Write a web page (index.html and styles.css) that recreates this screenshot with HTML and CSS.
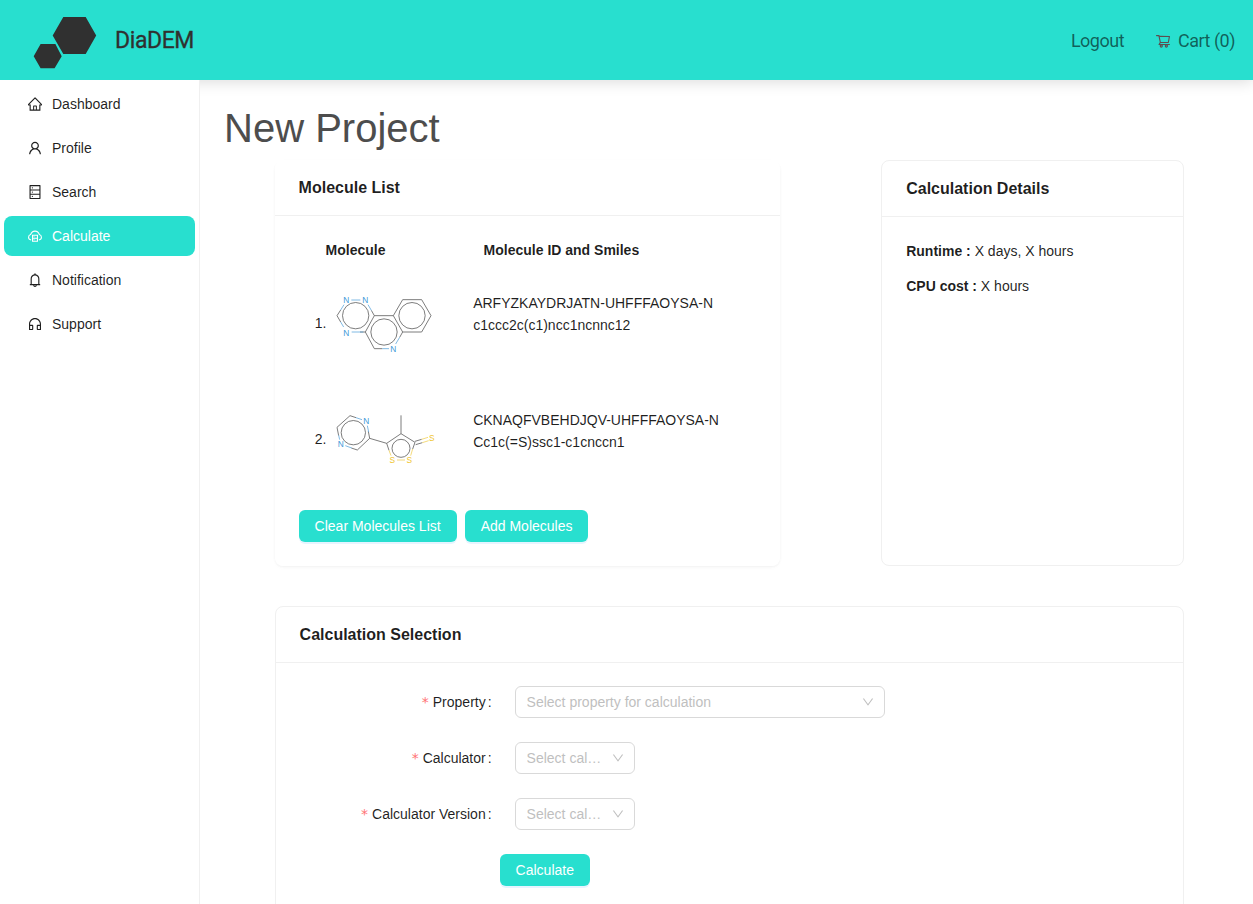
FILE: index.html
```html
<!DOCTYPE html>
<html lang="en">
<head>
<meta charset="utf-8">
<title>DiaDEM</title>
<link rel="stylesheet" href="styles.css">
</head>
<body>
<header class="topbar">
  <svg class="logo" width="64" height="54" viewBox="0 0 64 54"><path d="M30.3 1h22.4L63.2 19.600 52.700 38H30.300L19.700 19.600zM7.600 28h14.800l6.300 12.300L21.600 52.300H7.600L.7 40.300z"/></svg>
  <span class="brand">DiaDEM</span>
  <nav class="actions">
    <a class="action">Logout</a>
    <a class="action cart"><svg class="icon" viewBox="64 64 896 896"><path d="M922.9 701.9H327.4l29.9-60.9 496.8-.9c16.8 0 31.2-12 34.2-28.6l68.8-385.1c1.8-10.1-.9-20.5-7.5-28.4a34.99 34.99 0 00-26.6-12.5l-632-2.1-5.4-25.4c-3.4-16.2-18-28-34.6-28H96.500a35.300 35.300 0 100 70.600h125.900L246 312.800l58.100 281.300-74.800 122.100a34.960 34.960 0 00-3 36.800c6 11.900 18.100 19.400 31.500 19.400h62.800a102.430 102.430 0 00-20.600 61.700c0 56.600 46 102.600 102.600 102.600s102.600-46 102.600-102.600c0-22.300-7.400-44-20.600-61.700h161.100a102.430 102.430 0 00-20.600 61.700c0 56.600 46 102.600 102.600 102.600s102.600-46 102.600-102.600c0-22.300-7.400-44-20.600-61.700H923c19.400 0 35.300-15.800 35.300-35.300a35.420 35.420 0 00-35.400-35.200zM305.700 253l575.800 1.900-56.400 315.800-452.300.8L305.700 253zm96.900 612.700c-17.400 0-31.600-14.200-31.600-31.600 0-17.400 14.200-31.600 31.600-31.600s31.600 14.200 31.600 31.600a31.600 31.600 0 01-31.600 31.600zm325.100 0c-17.400 0-31.600-14.200-31.600-31.600 0-17.400 14.200-31.600 31.600-31.600s31.600 14.200 31.600 31.600a31.600 31.600 0 01-31.600 31.600z"/></svg><span>Cart (0)</span></a>
  </nav>
</header>
<div class="layout">
  <aside class="sider">
    <a class="item"><svg class="icon" viewBox="64 64 896 896"><path d="M946.5 505L560.1 118.8l-25.9-25.9a31.5 31.5 0 00-44.4 0L77.5 505a63.9 63.9 0 00-18.8 46c.4 35.2 29.7 63.3 64.9 63.3h42.5V940h691.8V614.3h43.4c17.1 0 33.2-6.7 45.3-18.8a63.6 63.6 0 0018.7-45.3c0-17-6.7-33.1-18.8-45.2zM568 868H456V664h112v204zm217.9-325.7V868H632V640c0-22.1-17.9-40-40-40H432c-22.1 0-40 17.900-40 40v228H238.100V542.300h-96l370-369.700 23.100 23.100L882 542.300h-96.100z"/></svg>Dashboard</a>
    <a class="item"><svg class="icon" viewBox="64 64 896 896"><path d="M858.5 763.6a374 374 0 00-80.6-119.5 375.63 375.63 0 00-119.5-80.6c-.4-.2-.8-.3-1.2-.5C719.5 518 760 444.7 760 362c0-137-111-248-248-248S264 225 264 362c0 82.7 40.5 156 102.8 201.100-.4.2-.8.3-1.200.5-44.800 18.900-85 46-119.500 80.600a375.630 375.630 0 00-80.600 119.500A371.700 371.700 0 00136 901.800a8 8 0 008 8.200h60c4.400 0 7.900-3.500 8-7.800 2-77.200 33-149.500 87.800-204.300 56.700-56.700 132-87.900 212.200-87.900s155.500 31.200 212.200 87.900C779 752.700 810 825 812 902.200c.1 4.400 3.600 7.800 8 7.800h60a8 8 0 008-8.200c-1-47.800-10.900-94.300-29.500-138.200zM512 534c-45.900 0-89.100-17.900-121.600-50.400S340 407.900 340 362c0-45.900 17.900-89.100 50.400-121.600S466.100 190 512 190s89.100 17.900 121.600 50.400S684 316.100 684 362c0 45.900-17.900 89.100-50.400 121.600S557.900 534 512 534z"/></svg>Profile</a>
    <a class="item"><svg class="icon" viewBox="64 64 896 896"><path d="M832 64H192c-17.7 0-32 14.3-32 32v832c0 17.7 14.3 32 32 32h640c17.7 0 32-14.3 32-32V96c0-17.700-14.300-32-32-32zm-600 72h560v208H232V136zm560 480H232V408h560v208zm0 272H232V680h560v208zM304 240a40 40 0 1080 0 40 40 0 10-80 0zm0 272a40 40 0 1080 0 40 40 0 10-80 0zm0 272a40 40 0 1080 0 40 40 0 10-80 0z"/></svg>Search</a>
    <a class="item active"><svg class="icon" viewBox="64 64 896 896"><g fill="none" stroke="currentColor" stroke-width="68"><path d="M264 766C165 748 100 680 100 594c0-82 52-148 130-171C270 306 380 198 512 198s242 108 282 225c78 23 130 89 130 171 0 86-65 154-164 172"/><path d="M354 462h316v384H354zM354 654h316" /><path d="M420 558h60M420 750h60" stroke-width="56"/></g></svg>Calculate</a>
    <a class="item"><svg class="icon" viewBox="64 64 896 896"><path d="M816 768h-24V428c0-141.1-104.3-257.7-240-277.1V112c0-22.1-17.9-40-40-40s-40 17.9-40 40v38.9c-135.7 19.4-240 136-240 277.1v340h-24c-17.7 0-32 14.3-32 32v32c0 4.4 3.6 8 8 8h216c0 61.8 50.2 112 112 112s112-50.2 112-112h216c4.4 0 8-3.6 8-8v-32c0-17.700-14.300-32-32-32zM512 888c-26.500 0-48-21.500-48-48h96c0 26.500-21.500 48-48 48zM304 768V428c0-55.600 21.600-107.800 60.900-147.100S456.400 220 512 220c55.600 0 107.800 21.600 147.100 60.900S720 372.400 720 428v340H304z"/></svg>Notification</a>
    <a class="item"><svg class="icon" viewBox="64 64 896 896"><path d="M512 128c-212.1 0-384 171.9-384 384v360c0 13.3 10.7 24 24 24h184c35.3 0 64-28.7 64-64V624c0-35.3-28.7-64-64-64H200v-48c0-172.3 139.7-312 312-312s312 139.7 312 312v48H688c-35.3 0-64 28.7-64 64v208c0 35.3 28.7 64 64 64h184c13.3 0 24-10.7 24-24V512c0-212.100-171.900-384-384-384zM328 632v192H200V632h128zm496 192H696V632h128v192z"/></svg>Support</a>
  </aside>
  <main class="content">
    <h1 class="title">New Project</h1>
    <div class="cards">
      <section class="card raised">
        <h2 class="card-head">Molecule List</h2>
        <div class="list-head"><span>Molecule</span><span>Molecule ID and Smiles</span></div>
        <div class="molecule">
          <span class="num">1.</span>
          <svg class="drawing" width="110" height="90" viewBox="90 0 330 270">
            <g class="bond"><path d="M214 91L223 107L196 156M122 90L111 107L122 126M223 107H280L308 156M180 156H196L223 206H247M280 107L308 59H365L393 107L365 156H308L299 172"/><circle cx="167" cy="107" r="39.500"/><circle cx="252" cy="156" r="39.500"/><circle cx="336" cy="107" r="39.500"/></g>
            <path class="bond-n" d="M154 60H181M204 74L214 91M132 74L122 90M122 126L131 141M155 156H190M247 206H267M287 192L299 172"/>
            <g class="atom atom-n"><text x="139" y="69">N</text><text x="196" y="69">N</text><text x="139" y="167">N</text><text x="280" y="216">N</text></g>
          </svg>
          <p class="smiles">ARFYZKAYDRJATN-UHFFFAOYSA-N<br>c1ccc2c(c1)ncc1ncnnc12</p>
        </div>
        <div class="molecule">
          <span class="num">2.</span>
          <svg class="drawing" width="110" height="90" viewBox="90 -9 330 270">
            <g class="bond"><path d="M168 53L150 47L111 82L116 107M205 94L209 115L172 150L154 144M209 115L260 130L303 101L345 127L338 147M303 101V46M260 130L267 151M345 124L365 118M347 134L367 128"/><circle cx="160" cy="98" r="36.500"/><circle cx="303" cy="145" r="27"/></g>
            <path class="bond-n" d="M186 59L168 53M202 77L206 96M116 106L119 119M136 137L155 144"/>
            <path class="bond-s" d="M365 118L384 112M367 128L386 122M338 147L332 167M267 151L273 167M291 180H315"/>
            <g class="atom atom-n"><text x="199" y="73">N</text><text x="122" y="141">N</text></g>
            <g class="atom atom-s"><text x="395" y="123">S</text><text x="277" y="189">S</text><text x="328" y="189">S</text></g>
          </svg>
          <p class="smiles">CKNAQFVBEHDJQV-UHFFFAOYSA-N<br>Cc1c(=S)ssc1-c1cnccn1</p>
        </div>
        <div class="buttons"><button class="btn">Clear Molecules List</button><button class="btn">Add Molecules</button></div>
      </section>
      <section class="card bordered">
        <h2 class="card-head">Calculation Details</h2>
        <div class="details"><p><b>Runtime :</b> X days, X hours</p><p><b>CPU cost :</b> X hours</p></div>
      </section>
      <section class="card bordered selection">
        <h2 class="card-head">Calculation Selection</h2>
        <div class="form">
          <div class="field"><label class="label">Property</label><div class="select wide"><span class="placeholder">Select property for calculation</span><svg class="arrow" viewBox="64 64 896 896"><path d="M884 256h-75c-5.100 0-9.900 2.500-12.900 6.600L512 654.200 227.900 262.600c-3-4.100-7.800-6.600-12.900-6.600h-75c-6.500 0-10.300 7.400-6.500 12.700l352.600 486.100c12.800 17.600 39 17.600 51.700 0l352.600-486.100c3.900-5.300.1-12.700-6.400-12.700z"/></svg></div></div>
          <div class="field"><label class="label">Calculator</label><div class="select"><span class="placeholder">Select calculator</span><svg class="arrow" viewBox="64 64 896 896"><path d="M884 256h-75c-5.100 0-9.900 2.500-12.900 6.600L512 654.200 227.900 262.600c-3-4.100-7.800-6.600-12.900-6.600h-75c-6.500 0-10.300 7.400-6.500 12.700l352.600 486.100c12.800 17.600 39 17.600 51.700 0l352.600-486.100c3.900-5.300.1-12.700-6.400-12.700z"/></svg></div></div>
          <div class="field"><label class="label">Calculator Version</label><div class="select"><span class="placeholder">Select calculator version</span><svg class="arrow" viewBox="64 64 896 896"><path d="M884 256h-75c-5.100 0-9.900 2.500-12.900 6.600L512 654.200 227.900 262.600c-3-4.100-7.800-6.600-12.900-6.600h-75c-6.500 0-10.300 7.400-6.500 12.700l352.600 486.100c12.800 17.600 39 17.600 51.700 0l352.600-486.100c3.900-5.300.1-12.700-6.400-12.700z"/></svg></div></div>
          <button class="btn submit">Calculate</button>
        </div>
      </section>
    </div>
  </main>
</div>
</body>
</html>
```
FILE: styles.css
```css
* { box-sizing: border-box; }
body {
  margin: 0;
  height: 904px;
  overflow: hidden;
  background: #fff;
  color: rgba(0, 0, 0, 0.88);
  font: 14px/22px "Liberation Sans", Arial, sans-serif;
}
h1, h2, p { margin: 0; }
.topbar {
  display: flex;
  align-items: center;
  height: 80px;
  padding: 0 18px 0 33px;
  background: #28dfcf;
  box-shadow: 0 2px 14px rgba(0, 0, 0, 0.14);
  font-family: Roboto, sans-serif;
}
.logo { margin-top: 5px; fill: #303030; }
.brand { margin: 2px 0 0 18px; color: #303030; font-size: 23px; font-weight: 400; letter-spacing: -0.4px; -webkit-text-stroke: 0.3px #303030; }
.actions { display: flex; gap: 32px; margin: 2px 0 0 auto; color: rgba(0, 0, 0, 0.58); font-size: 18px; letter-spacing: -0.5px; }
.action { display: flex; align-items: center; }
.cart { gap: 8px; }
.cart .icon { color: #5c4f50; }
.icon { width: 14px; height: 14px; flex: none; fill: currentColor; }
.layout { display: flex; height: 824px; }
.sider {
  position: relative;
  display: flex;
  flex-direction: column;
  gap: 4px;
  width: 200px;
  padding: 4px;
  background: #fff;
  border-right: 1px solid #f0f0f0;
}
.item { display: flex; align-items: center; gap: 10px; height: 40px; padding-left: 24px; border-radius: 8px; }
.active { background: #28dfcf; color: #fff; }
.content { flex: 1; padding: 24px 69px 0 24px; }
.title { height: 56px; line-height: 48px; color: #4d4d4d; font-size: 40px; font-weight: 400; }
.cards { display: grid; grid-template-columns: 505.6px 302.8px; grid-template-rows: 406px 330px; gap: 40px 101px; margin-left: 50.6px; }
.card { border-radius: 8px; }
.raised { box-shadow: 0 1px 2px rgba(0, 0, 0, 0.03), 0 1px 6px -1px rgba(0, 0, 0, 0.02), 0 2px 4px rgba(0, 0, 0, 0.02); }
.bordered { border: 1px solid #f0f0f0; }
.selection { grid-column: 1 / 3; }
.card-head { height: 56px; padding: 0 24px; border-bottom: 1px solid #f0f0f0; font-size: 16px; line-height: 55px; }
.list-head { display: grid; grid-template-columns: 158px 1fr; height: 64px; padding: 23px 0 0 51px; font-weight: 700; }
.molecule { display: grid; grid-template-columns: 15.4px 110px 1fr; height: 117px; padding-left: 40.2px; }
.molecule + .molecule { height: 113px; }
.num { padding-top: 32px; }
.molecule + .molecule .num { padding-top: 31px; }
.drawing { display: block; }
.smiles { padding: 12px 0 0 33px; }
.bond { fill: none; stroke: #555; stroke-width: 2.3; }
.bond-n { fill: none; stroke: #5aa5dc; stroke-width: 2.3; }
.bond-s { fill: none; stroke: #f0cf52; stroke-width: 2.3; }
.atom { font-size: 25px; text-anchor: middle; }
.atom-n { fill: #3b97d8; }
.atom-s { fill: #efc52f; }
.buttons { display: flex; gap: 8px; padding-left: 24px; }
.btn {
  height: 32px;
  padding: 0 16px;
  border: 0;
  border-radius: 6px;
  background: #28dfcf;
  box-shadow: 0 2px 0 rgba(5, 145, 255, 0.1);
  color: #fff;
  font: inherit;
}
.details { display: flex; flex-direction: column; gap: 13px; padding: 23px 24px; }
.form { display: flex; flex-direction: column; align-items: flex-start; gap: 24px; padding: 23px 24px; }
.field { display: grid; grid-template-columns: 192px auto; column-gap: 23px; align-items: center; }
.label { text-align: right; white-space: nowrap; }
.label::before { content: "*"; margin-right: 4px; color: #ff7375; font-family: "DejaVu Sans", sans-serif; line-height: 1; }
.label::after { content: ":"; margin-left: 2px; }
.select { display: flex; align-items: center; justify-content: space-between; width: 120px; height: 32px; padding: 0 10px 0 11px; border: 1px solid #d9d9d9; border-radius: 6px; }
.wide { width: 370px; }
.placeholder { overflow: hidden; padding-right: 7px; color: #bfbfbf; text-overflow: ellipsis; white-space: nowrap; }
.arrow { flex: none; width: 12px; height: 12px; fill: #bfbfbf; }
.submit { margin-left: 200px; }
```
